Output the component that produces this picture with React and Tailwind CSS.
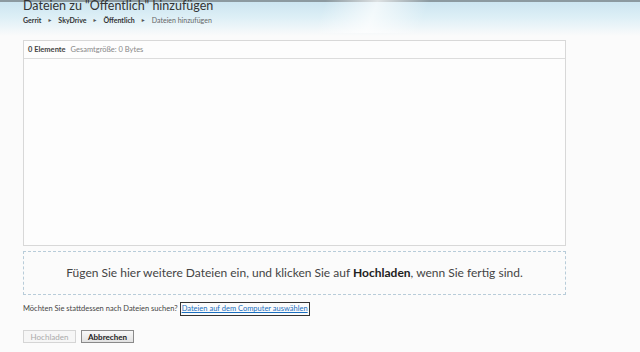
export default function App() {
  const font = { fontFamily: 'Lato, "Noto Sans", sans-serif' };
  return (
    <div className="w-[640px] h-[352px] overflow-hidden bg-[#fbfbfb] text-[#333]" style={font}>
      <div className="h-[36px] border-t-2 border-[#8c9aa0] bg-[linear-gradient(180deg,#cce5f0_0%,#ddeff6_45%,#fbfbfb_100%)]">
        <div className="h-full bg-[linear-gradient(110deg,transparent_0%,transparent_50%,rgba(255,255,255,0.7)_58%,transparent_66%,transparent_100%)] pl-[23px]">
          <div className="mt-[-3px] text-[12.5px] leading-[14px] text-[#333]">Dateien zu "Öffentlich" hinzufügen</div>
          <div className="mt-[2px] flex items-center gap-[6px] text-[7px] leading-[10px]">
            <span className="font-bold text-[#333]">Gerrit</span>
            <span className="text-[5px] text-[#555]">►</span>
            <span className="font-bold text-[#333]">SkyDrive</span>
            <span className="text-[5px] text-[#555]">►</span>
            <span className="font-bold text-[#333]">Öffentlich</span>
            <span className="text-[5px] text-[#555]">►</span>
            <span className="text-[#666]">Dateien hinzufügen</span>
          </div>
        </div>
      </div>
      <div className="pl-[23px] w-[566px] pt-[4px]">
        <div className="h-[206px] border border-[#d8d8d8] bg-[#fdfdfd] flex flex-col">
          <div className="h-[18px] border-b border-[#dcdcdc] flex items-center pl-[4px] gap-[5px] text-[7.5px]">
            <span className="font-bold text-[#444]">0 Elemente</span>
            <span className="text-[#888]">Gesamtgröße: 0 Bytes</span>
          </div>
        </div>
        <div className="mt-[5px] h-[44px] border border-dashed border-[#b8ccd9] flex items-center justify-center text-[12px] text-[#444]">
          <span>Fügen Sie hier weitere Dateien ein, und klicken Sie auf <b className="font-bold text-[#222]">Hochladen</b>, wenn Sie fertig sind.</span>
        </div>
        <div className="mt-[7px] flex items-center text-[7.5px] leading-[12px] text-[#444]">
          <span>Möchten Sie stattdessen nach Dateien suchen?</span>
          <span className="ml-[2px] border border-[#333] px-[1px] text-[#1a6fc0] underline">Dateien auf dem Computer auswählen</span>
        </div>
        <div className="mt-[14px] flex gap-[5px] text-[8px]">
          <div className="w-[53px] h-[13px] border border-[#d5d5d5] bg-[#f6f6f6] text-[#aaa] flex items-center justify-center">Hochladen</div>
          <div className="w-[53px] h-[13px] border border-[#8a8a8a] bg-[linear-gradient(180deg,#f8f8f8,#e2e2e2)] text-[#222] font-bold flex items-center justify-center">Abbrechen</div>
        </div>
      </div>
    </div>
  );
}
